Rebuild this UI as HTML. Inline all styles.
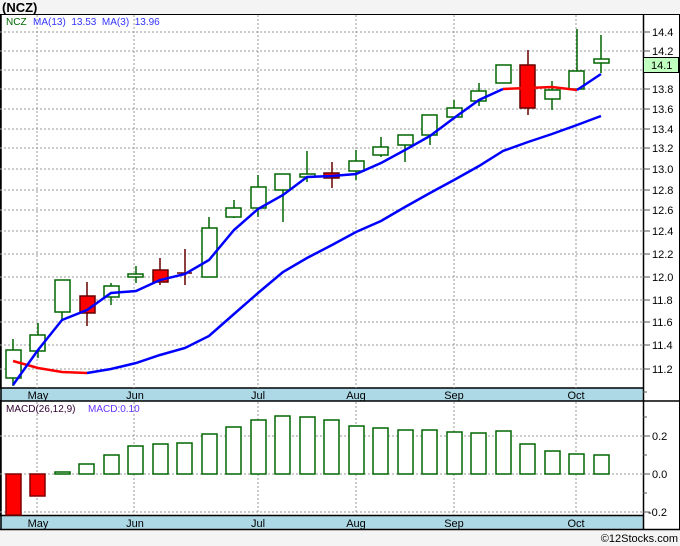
<!DOCTYPE html>
<html><head><style>
html,body{margin:0;padding:0;background:#f4f4f4;}
svg{display:block;font-family:"Liberation Sans",sans-serif;}
</style></head><body>
<svg width="680" height="546" viewBox="0 0 680 546" xmlns="http://www.w3.org/2000/svg">
<rect x="0" y="0" width="680" height="546" fill="#f4f4f4"/>
<text x="2" y="12" font-size="13" font-weight="bold" fill="#000">(NCZ)</text>
<rect x="0.5" y="14.5" width="679" height="515" fill="#fff" stroke="#000"/>
<!-- date strips -->
<rect x="0" y="388" width="643" height="13" fill="#add8e6"/>
<rect x="0" y="516" width="643" height="14" fill="#add8e6"/>
<g stroke="#000" stroke-width="1.5">
<line x1="0" y1="388" x2="643" y2="388"/>
<line x1="0" y1="401" x2="680" y2="401"/>
<line x1="0" y1="515.5" x2="643" y2="515.5"/>
<line x1="0" y1="529.5" x2="680" y2="529.5"/>
<line x1="643.5" y1="14" x2="643.5" y2="530"/>
<line x1="1" y1="14" x2="1" y2="530"/>
</g>
<!-- grid -->
<g stroke="#999" stroke-dasharray="2,2" stroke-width="1">
<line x1="0" y1="32" x2="643" y2="32"/><line x1="0" y1="51" x2="643" y2="51"/><line x1="0" y1="70" x2="643" y2="70"/>
<line x1="0" y1="89" x2="643" y2="89"/><line x1="0" y1="109" x2="643" y2="109"/><line x1="0" y1="129" x2="643" y2="129"/>
<line x1="0" y1="148" x2="643" y2="148"/><line x1="0" y1="169" x2="643" y2="169"/><line x1="0" y1="190" x2="643" y2="190"/>
<line x1="0" y1="210" x2="643" y2="210"/><line x1="0" y1="231" x2="643" y2="231"/><line x1="0" y1="254" x2="643" y2="254"/>
<line x1="0" y1="277" x2="643" y2="277"/><line x1="0" y1="300" x2="643" y2="300"/><line x1="0" y1="322" x2="643" y2="322"/>
<line x1="0" y1="345" x2="643" y2="345"/><line x1="0" y1="369" x2="643" y2="369"/>
<line x1="0" y1="436" x2="643" y2="436"/><line x1="0" y1="474" x2="643" y2="474"/><line x1="0" y1="512" x2="643" y2="512"/>
<line x1="37" y1="15" x2="37" y2="388"/><line x1="134" y1="15" x2="134" y2="388"/><line x1="258" y1="15" x2="258" y2="388"/>
<line x1="356" y1="15" x2="356" y2="388"/><line x1="454" y1="15" x2="454" y2="388"/><line x1="576" y1="15" x2="576" y2="388"/>
<line x1="37" y1="402" x2="37" y2="515"/><line x1="134" y1="402" x2="134" y2="515"/><line x1="258" y1="402" x2="258" y2="515"/>
<line x1="356" y1="402" x2="356" y2="515"/><line x1="454" y1="402" x2="454" y2="515"/><line x1="576" y1="402" x2="576" y2="515"/>
</g>
<!-- right axis ticks -->
<g stroke="#555" stroke-width="1">
<line x1="643" y1="32" x2="650" y2="32"/><line x1="643" y1="51" x2="650" y2="51"/><line x1="643" y1="70" x2="650" y2="70"/><line x1="643" y1="89" x2="650" y2="89"/><line x1="643" y1="109" x2="650" y2="109"/><line x1="643" y1="129" x2="650" y2="129"/><line x1="643" y1="148" x2="650" y2="148"/><line x1="643" y1="169" x2="650" y2="169"/><line x1="643" y1="190" x2="650" y2="190"/><line x1="643" y1="210" x2="650" y2="210"/><line x1="643" y1="231" x2="650" y2="231"/><line x1="643" y1="254" x2="650" y2="254"/><line x1="643" y1="277" x2="650" y2="277"/><line x1="643" y1="300" x2="650" y2="300"/><line x1="643" y1="322" x2="650" y2="322"/><line x1="643" y1="345" x2="650" y2="345"/><line x1="643" y1="369" x2="650" y2="369"/>
<line x1="643" y1="392" x2="647" y2="392"/>
<line x1="643" y1="417" x2="647" y2="417"/><line x1="643" y1="436" x2="650" y2="436"/><line x1="643" y1="455" x2="647" y2="455"/><line x1="643" y1="474" x2="650" y2="474"/><line x1="643" y1="493" x2="647" y2="493"/><line x1="643" y1="512" x2="650" y2="512"/>
</g>
<g font-size="11" fill="#000">
<text x="652" y="36">14.4</text><text x="652" y="55">14.2</text><text x="652" y="93">13.8</text><text x="652" y="113">13.6</text><text x="652" y="133">13.4</text><text x="652" y="152">13.2</text><text x="652" y="173">13.0</text><text x="652" y="194">12.8</text><text x="652" y="214">12.6</text><text x="652" y="235">12.4</text><text x="652" y="258">12.2</text><text x="652" y="281">12.0</text><text x="652" y="304">11.8</text><text x="652" y="326">11.6</text><text x="652" y="349">11.4</text><text x="652" y="373">11.2</text>
<text x="652" y="440">0.2</text><text x="652" y="478">0.0</text><text x="648" y="516">-0.2</text>
</g>
<rect x="643.5" y="57.5" width="35" height="15" fill="#c0ffc0" stroke="#000"/>
<text x="651" y="69" font-size="11">14.1</text>
<!-- month labels -->
<g font-size="11" fill="#000" text-anchor="middle">
<text x="38" y="399">May</text><text x="135" y="399">Jun</text><text x="258" y="399">Jul</text><text x="356" y="399">Aug</text><text x="454" y="399">Sep</text><text x="576" y="399">Oct</text>
<text x="38" y="527">May</text><text x="135" y="527">Jun</text><text x="258" y="527">Jul</text><text x="356" y="527">Aug</text><text x="454" y="527">Sep</text><text x="576" y="527">Oct</text>
</g>
<text x="6" y="25" font-size="10" fill="#006600">NCZ</text>
<text x="33" y="25" font-size="10" fill="#3333ff" xml:space="preserve">MA(13)  13.53  MA(3)  13.96</text>
<text x="6" y="412" font-size="10" fill="#330033">MACD(26,12,9)</text>
<text x="88" y="412" font-size="10" fill="#6633ff">MACD:0.10</text>
<!-- candles -->
<g stroke="#006600" stroke-width="1.5" fill="#fff">
<line x1="13" y1="339" x2="13" y2="386"/><rect x="6" y="350" width="15" height="28"/>
<line x1="38" y1="323" x2="38" y2="358"/><rect x="30" y="335" width="15" height="16"/>
<line x1="62" y1="280" x2="62" y2="321"/><rect x="55" y="280" width="15" height="32"/>
<line x1="111" y1="283" x2="111" y2="305"/><rect x="104" y="286" width="15" height="11"/>
<line x1="136" y1="266" x2="136" y2="283"/><rect x="128" y="274" width="15" height="3"/>
<line x1="209" y1="217" x2="209" y2="277"/><rect x="202" y="228" width="15" height="49"/>
<line x1="234" y1="200" x2="234" y2="218"/><rect x="226" y="208" width="15" height="9"/>
<line x1="258" y1="175" x2="258" y2="217"/><rect x="251" y="187" width="15" height="21"/>
<line x1="283" y1="174" x2="283" y2="222"/><rect x="275" y="174" width="15" height="16"/>
<line x1="307" y1="151" x2="307" y2="182"/><rect x="300" y="174" width="15" height="3"/>
<line x1="356" y1="150" x2="356" y2="180"/><rect x="349" y="161" width="15" height="10"/>
<line x1="381" y1="137" x2="381" y2="157"/><rect x="373" y="147" width="15" height="8"/>
<line x1="405" y1="135" x2="405" y2="162"/><rect x="398" y="135" width="15" height="10"/>
<line x1="430" y1="115" x2="430" y2="145"/><rect x="422" y="115" width="15" height="20"/>
<line x1="454" y1="100" x2="454" y2="118"/><rect x="447" y="108" width="15" height="9"/>
<line x1="479" y1="83" x2="479" y2="106"/><rect x="471" y="91" width="15" height="10"/>
<line x1="503" y1="65" x2="503" y2="83"/><rect x="496" y="65" width="15" height="18"/>
<line x1="552" y1="81" x2="552" y2="110"/><rect x="545" y="90" width="15" height="9"/>
<line x1="577" y1="29" x2="577" y2="89"/><rect x="569" y="71" width="15" height="18"/>
<line x1="601" y1="35" x2="601" y2="73"/><rect x="594" y="59" width="15" height="4"/>
</g>
<g stroke="#660000" stroke-width="1.5" fill="#f00">
<line x1="87" y1="282" x2="87" y2="326"/><rect x="80" y="296" width="15" height="17"/>
<line x1="160" y1="258" x2="160" y2="285"/><rect x="153" y="270" width="15" height="12"/>
<line x1="185" y1="249" x2="185" y2="285"/><line x1="177" y1="273" x2="192" y2="273"/>
<line x1="332" y1="162" x2="332" y2="188"/><rect x="324" y="173" width="15" height="5"/>
<line x1="528" y1="50" x2="528" y2="115"/><rect x="520" y="65" width="15" height="43"/>
</g>
<!-- MA13 -->
<polyline fill="none" stroke="#f00" stroke-width="2.5" points="13,361 38,368 62,372 87,373"/>
<polyline fill="none" stroke="#00f" stroke-width="2.5" points="87,373 111,369 136,363 160,355 185,348 209,336 234,314 258,293 283,272 307,258 332,245 356,232 381,221 405,207 430,193 454,180 479,166 503,151 528,142 552,134 577,125 601,116"/>
<!-- MA3 -->
<polyline fill="none" stroke="#00f" stroke-width="2.5" points="13,385 38,350 62,320 87,310 111,293 136,291 160,280 185,274 209,260 234,230 258,209 283,195 307,177 332,176 356,174 381,163 405,150 430,136 454,118 479,100 503,89"/>
<polyline fill="none" stroke="#f00" stroke-width="2.5" points="503,89 528,88 552,87 577,90"/>
<polyline fill="none" stroke="#00f" stroke-width="2.5" points="577,90 601,74"/>
<!-- MACD -->
<g stroke="#800000" stroke-width="1.5" fill="#f00">
<rect x="6" y="474" width="15" height="41"/><rect x="30" y="474" width="15" height="22"/>
</g>
<g stroke="#006600" stroke-width="1.5" fill="#fff">
<rect x="55" y="472" width="15" height="2"/><rect x="79" y="464" width="15" height="10"/><rect x="104" y="455" width="15" height="19"/><rect x="128" y="446" width="15" height="28"/><rect x="153" y="444" width="15" height="30"/><rect x="177" y="443" width="15" height="31"/><rect x="202" y="434" width="15" height="40"/><rect x="226" y="427" width="15" height="47"/><rect x="251" y="420" width="15" height="54"/><rect x="275" y="416" width="15" height="58"/><rect x="300" y="417" width="15" height="57"/><rect x="324" y="420" width="15" height="54"/><rect x="349" y="426" width="15" height="48"/><rect x="373" y="428" width="15" height="46"/><rect x="398" y="430" width="15" height="44"/><rect x="422" y="430" width="15" height="44"/><rect x="447" y="432" width="15" height="42"/><rect x="471" y="433" width="15" height="41"/><rect x="496" y="431" width="15" height="43"/><rect x="520" y="444" width="15" height="30"/><rect x="545" y="451" width="15" height="23"/><rect x="569" y="454" width="15" height="20"/><rect x="594" y="455" width="15" height="19"/>
</g>
<text x="678" y="542" font-size="11" fill="#000" text-anchor="end">©12Stocks.com</text>
</svg>
</body></html>
